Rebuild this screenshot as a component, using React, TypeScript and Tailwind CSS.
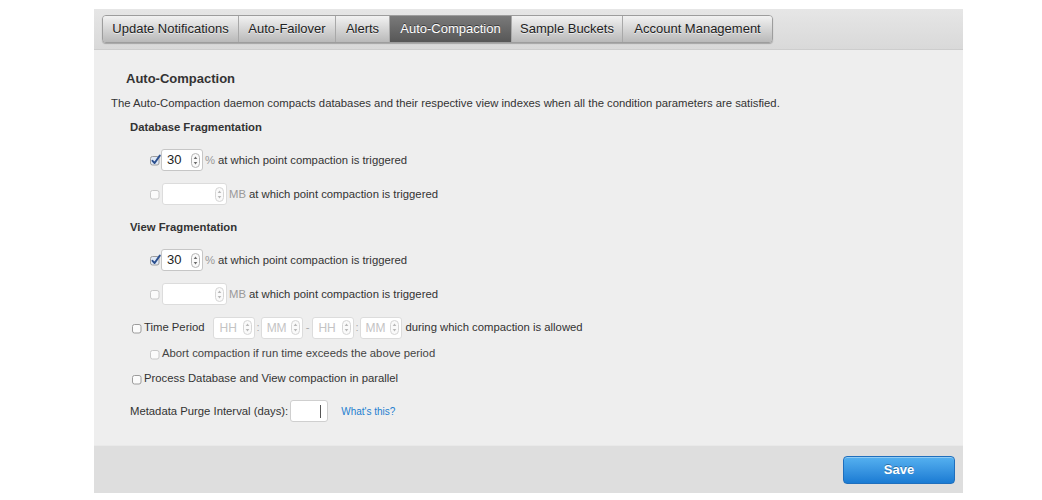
import React from "react";

const tabs = [
  { label: "Update Notifications", w: "w-[136px]" },
  { label: "Auto-Failover", w: "w-[97px]" },
  { label: "Alerts", w: "w-[54px]" },
  { label: "Auto-Compaction", w: "w-[122px]", active: true },
  { label: "Sample Buckets", w: "w-[111px]" },
  { label: "Account Management", w: "w-[149px]" },
];

function Checkbox({ checked, disabled }: { checked?: boolean; disabled?: boolean }) {
  return (
    <svg width="12" height="12" viewBox="0 0 12 12" className="shrink-0">
      <rect
        x="1.5"
        y="2.5"
        width="8.5"
        height="8.5"
        rx="2"
        fill={checked ? "#dfe8f5" : "#fbfbfb"}
        stroke={disabled ? "#c8c8c8" : "#9c9c9c"}
      />
      {checked && (
        <path d="M3.5 6.8 L5.6 9 L10.8 1.6" fill="none" stroke="#2b4f8e" strokeWidth="1.9" strokeLinecap="round" strokeLinejoin="round" />
      )}
    </svg>
  );
}

function Spinner({ faded }: { faded?: boolean }) {
  const c = faded ? "#b8b8b8" : "#6b6b6b";
  return (
    <svg width="9" height="15" viewBox="0 0 9 15" className="shrink-0">
      <rect x="0.5" y="0.5" width="8" height="14" rx="4" fill="#fafafa" stroke={faded ? "#d6d6d6" : "#b4b4b4"} />
      <path d="M2.7 6 L4.5 3.6 L6.3 6 Z" fill={c} />
      <path d="M2.7 9 L4.5 11.4 L6.3 9 Z" fill={c} />
    </svg>
  );
}

function NumberInput({ value, placeholder, w, faded }: { value?: string; placeholder?: string; w: string; faded?: boolean }) {
  return (
    <div className={`${w} h-[22px] flex items-center justify-between pl-[5px] pr-[2px] bg-white border ${faded ? "border-[#dcdcdc]" : "border-[#c6c6c6]"} rounded-[3px] shrink-0`}>
      {value ? (
        <span className="text-[13px] text-[#222]">{value}</span>
      ) : (
        <span className="text-[12px] text-[#c4c4c4]">{placeholder}</span>
      )}
      <Spinner faded={faded} />
    </div>
  );
}

function ThresholdRow({ checked, unit, value }: { checked?: boolean; unit: string; value?: string }) {
  return (
    <div className="flex items-center h-[22px] pl-[55px]">
      <Checkbox checked={checked} disabled={!checked} />
      <div className={checked ? "ml-[0px]" : "ml-[1px]"}>
        <NumberInput value={value} w={checked ? "w-[42px]" : "w-[65px]"} faded={!checked} />
      </div>
      <span className="ml-[2px] text-[11.3px] text-[#9a9a9a]">{unit}</span>
      <span className="ml-[3px] text-[11.3px] text-[#333]">at which point compaction is triggered</span>
    </div>
  );
}

export default function App() {
  return (
    <div className="min-h-[500px] bg-white pl-[94px] pt-[9px] font-['Liberation_Sans',Arial,sans-serif] text-[#333]">
      <div className="w-[869px] h-[484px] flex flex-col bg-[#eeeeee]">
        {/* tab bar */}
        <div className="h-[41px] shrink-0 bg-gradient-to-b from-[#e6e6e6] to-[#d9d9d9] border-b border-[#cdcdcd] pl-[8px] pt-[6px]">
          <div className="flex h-[28px] rounded-[4px] overflow-hidden border border-[#9d9d9d] w-fit shadow-[0_1px_1px_rgba(0,0,0,0.25)]">
            {tabs.map((t, i) => (
              <div
                key={t.label}
                className={`${t.w} flex items-center justify-center text-[13px] ${i < tabs.length - 1 ? "border-r border-[#a8a8a8]" : ""} ${
                  t.active
                    ? "bg-gradient-to-b from-[#7a7a7a] to-[#575757] text-white [text-shadow:0_-1px_0_rgba(0,0,0,0.5)]"
                    : "bg-gradient-to-b from-[#f2f2f2] to-[#b9b9b9] text-[#222] [text-shadow:0_1px_0_rgba(255,255,255,0.6)]"
                }`}
              >
                {t.label}
              </div>
            ))}
          </div>
        </div>

        {/* content */}
        <div className="flex-1 flex flex-col pt-[21px] text-[11.3px]">
          <h2 className="pl-[32px] text-[13px] leading-[16px] font-bold text-[#333]">Auto-Compaction</h2>
          <p className="mt-[10px] pl-[17px] leading-[13px] text-[#333]">
            The Auto-Compaction daemon compacts databases and their respective view indexes when all the condition parameters are satisfied.
          </p>

          <h3 className="mt-[11px] pl-[36px] leading-[13px] font-bold">Database Fragmentation</h3>
          <div className="mt-[15px]">
            <ThresholdRow checked value="30" unit="%" />
          </div>
          <div className="mt-[12px]">
            <ThresholdRow unit="MB" />
          </div>

          <h3 className="mt-[16px] pl-[36px] leading-[13px] font-bold">View Fragmentation</h3>
          <div className="mt-[15px]">
            <ThresholdRow checked value="30" unit="%" />
          </div>
          <div className="mt-[12px]">
            <ThresholdRow unit="MB" />
          </div>

          {/* time period */}
          <div className="mt-[12px] flex items-center h-[21px] pl-[37px]">
            <Checkbox />
            <span className="ml-[1px]">Time Period</span>
            <div className="ml-[9px] flex items-center">
              <NumberInput placeholder="HH" w="w-[42px]" faded />
              <span className="mx-[1px] text-[#aaa]">:</span>
              <NumberInput placeholder="MM" w="w-[42px]" faded />
              <span className="mx-[3px] text-[#aaa]">-</span>
              <NumberInput placeholder="HH" w="w-[42px]" faded />
              <span className="mx-[1px] text-[#aaa]">:</span>
              <NumberInput placeholder="MM" w="w-[42px]" faded />
            </div>
            <span className="ml-[4px]">during which compaction is allowed</span>
          </div>
          <div className="mt-[9px] flex items-center h-[13px] pl-[55px] text-[#444]">
            <Checkbox disabled />
            <span className="ml-[1px]">Abort compaction if run time exceeds the above period</span>
          </div>

          <div className="mt-[12px] flex items-center h-[13px] pl-[37px]">
            <Checkbox />
            <span className="ml-[1px]">Process Database and View compaction in parallel</span>
          </div>

          <div className="mt-[15px] flex items-center h-[22px] pl-[36px]">
            <span>Metadata Purge Interval (days):</span>
            <div className="ml-[2px] w-[38px] h-[22px] bg-white border border-[#cfcfcf] rounded-[3px] flex items-center justify-end pr-[6px]">
              <span className="w-[1px] h-[13px] bg-[#555]" />
            </div>
            <a className="ml-[13px] text-[10px] text-[#1d7fd0]">What&apos;s this?</a>
          </div>
        </div>

        {/* footer */}
        <div className="h-[48px] shrink-0 bg-[#dedede] border-t border-[#e9e9e9] flex items-center justify-end pr-[8px]">
          <button className="w-[112px] h-[28px] rounded-[4px] border border-[#1f6fbd] bg-gradient-to-b from-[#55b1f0] to-[#1a7bd3] text-white text-[13px] font-bold [text-shadow:0_-1px_0_rgba(0,0,0,0.3)] shadow-[inset_0_1px_0_rgba(255,255,255,0.35)]">
            Save
          </button>
        </div>
      </div>
    </div>
  );
}
